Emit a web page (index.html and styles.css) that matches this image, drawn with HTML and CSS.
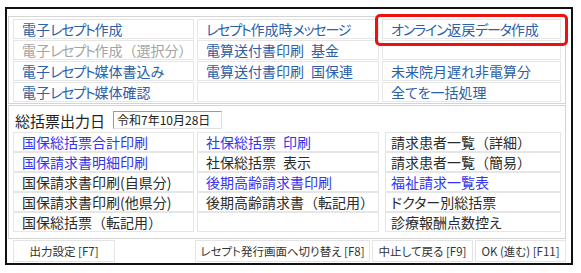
FILE: index.html
```html
<!DOCTYPE html>
<html lang="ja">
<head>
<meta charset="utf-8">
<link rel="stylesheet" href="styles.css">
</head>
<body>
<div class="frame">
  <div class="panel p1">
    <div class="grid">
      <div class="cell steel">電子<span class="k">レセプト</span>作成</div>
      <div class="cell steel"><span class="k">レセプト</span>作成時<span class="k">メッセージ</span></div>
      <div class="cell steel"><span class="k">オンライン</span>返戻<span class="k">データ</span>作成</div>
      <div class="cell gray">電子<span class="k">レセプト</span>作成<span class="fw">（</span>選択分<span class="fw">）</span></div>
      <div class="cell steel">電算送付書印刷&ensp;基金</div>
      <div class="cell"></div>
      <div class="cell steel">電子<span class="k">レセプト</span>媒体書込み</div>
      <div class="cell steel">電算送付書印刷&ensp;国保連</div>
      <div class="cell steel">未来院月遅れ非電算分</div>
      <div class="cell steel">電子<span class="k">レセプト</span>媒体確認</div>
      <div class="cell"></div>
      <div class="cell steel">全てを一括処理</div>
    </div>
  </div>
  <div class="panel p2">
    <div class="daterow">
      <span class="dlabel">総括票出力日</span>
      <div class="dinput">令和7年10月28日</div>
    </div>
    <div class="grid g2">
      <div class="cell blue">国保総括票合計印刷</div>
      <div class="cell blue">社保総括票&ensp;印刷</div>
      <div class="cell c3">請求患者一覧<span class="fw">（</span>詳細<span class="fw">）</span></div>
      <div class="cell blue">国保請求書明細印刷</div>
      <div class="cell">社保総括票&ensp;表示</div>
      <div class="cell c3">請求患者一覧<span class="fw">（</span>簡易<span class="fw">）</span></div>
      <div class="cell">国保請求書印刷(自県分)</div>
      <div class="cell blue">後期高齢請求書印刷</div>
      <div class="cell blue c3">福祉請求一覧表</div>
      <div class="cell">国保請求書印刷(他県分)</div>
      <div class="cell">後期高齢請求書<span class="fw">（</span>転記用<span class="fw">）</span></div>
      <div class="cell c3">ドクター別総括票</div>
      <div class="cell">国保総括票<span class="fw">（</span>転記用<span class="fw">）</span></div>
      <div class="cell"></div>
      <div class="cell c3">診療報酬点数控え</div>
    </div>
  </div>
  <div class="buttons">
    <div class="btn b1">出力設定 [F7]</div>
    <div class="btn b2">レセプト発行画面へ切り替え [F8]</div>
    <div class="btn b3">中止して戻る [F9]</div>
    <div class="btn b4">OK (進む) [F11]</div>
  </div>
  <div class="highlight"></div>
</div>
</body>
</html>
```

FILE: styles.css
```css
* { box-sizing: border-box; }
html, body { margin: 0; padding: 0; background: #ffffff; }
body {
  font-family: "Noto Sans CJK JP", "Noto Sans", sans-serif;
  font-feature-settings: "palt";
  color: #2b2b2b;
}
.frame {
  position: relative;
  margin: 7px 0 0 5px;
  width: 568px;
  height: 258px;
  border: 2px solid #111;
  background: #fff;
}
.panel {
  margin-left: 1px;
  width: 558px;
  border: 1px solid #d4d4d4;
}
.p1 {
  margin-top: 7px;
  padding: 2px 0 1px 4px;
}
.p2 {
  margin-top: 1px;
  height: 134px;
  padding: 4px 0 0 4px;
}
.grid {
  display: grid;
  grid-template-columns: 181px 182px 179px;
  grid-auto-rows: 20px;
  column-gap: 3px;
  row-gap: 1px;
}
.g2 {
  row-gap: 0;
  margin-top: 2px;
}
.cell {
  border: 1px solid #e6e6e6;
  background: #fff;
  font-size: 14px;
  line-height: 18px;
  padding-left: 8px;
  white-space: nowrap;
  overflow: hidden;
}
.k { letter-spacing: -1.2px; }
.fw { font-feature-settings: normal; }
.g2 .c3 { margin-left: 3px; padding-left: 5px; }
.steel { color: #2c60a8; }
.gray { color: #a3a3a3; }
.blue { color: #3434ec; }
.daterow {
  display: flex;
  align-items: flex-end;
  height: 20px;
}
.dlabel {
  margin-left: 2px;
  font-size: 15px;
  line-height: 18px;
  color: #222;
  width: 98px;
}
.dinput {
  width: 109px;
  height: 18px;
  margin-bottom: 1px;
  border-top: 1px solid #9a9a9a;
  border-left: 1px solid #9a9a9a;
  border-right: 1px solid #e0e0e0;
  border-bottom: 1px solid #e0e0e0;
  font-size: 12px;
  line-height: 15px;
  padding-left: 3px;
  color: #222;
}
.buttons {
  display: flex;
  margin-top: 1px;
  height: 22px;
}
.btn {
  border: 1px solid #e4e4e4;
  background: #fff;
  font-size: 11.5px;
  line-height: 20px;
  text-align: center;
  color: #333;
  white-space: nowrap;
}
.b1 { margin-left: 6px; width: 102px; }
.b2 { margin-left: 80px; width: 175px; }
.b3 { margin-left: 2px; width: 101px; }
.b4 { margin-left: 2px; width: 91px; }
.highlight {
  position: absolute;
  left: 368px;
  top: 5px;
  width: 193px;
  height: 32px;
  border: 3px solid #ee1111;
  border-radius: 5px;
}
```
